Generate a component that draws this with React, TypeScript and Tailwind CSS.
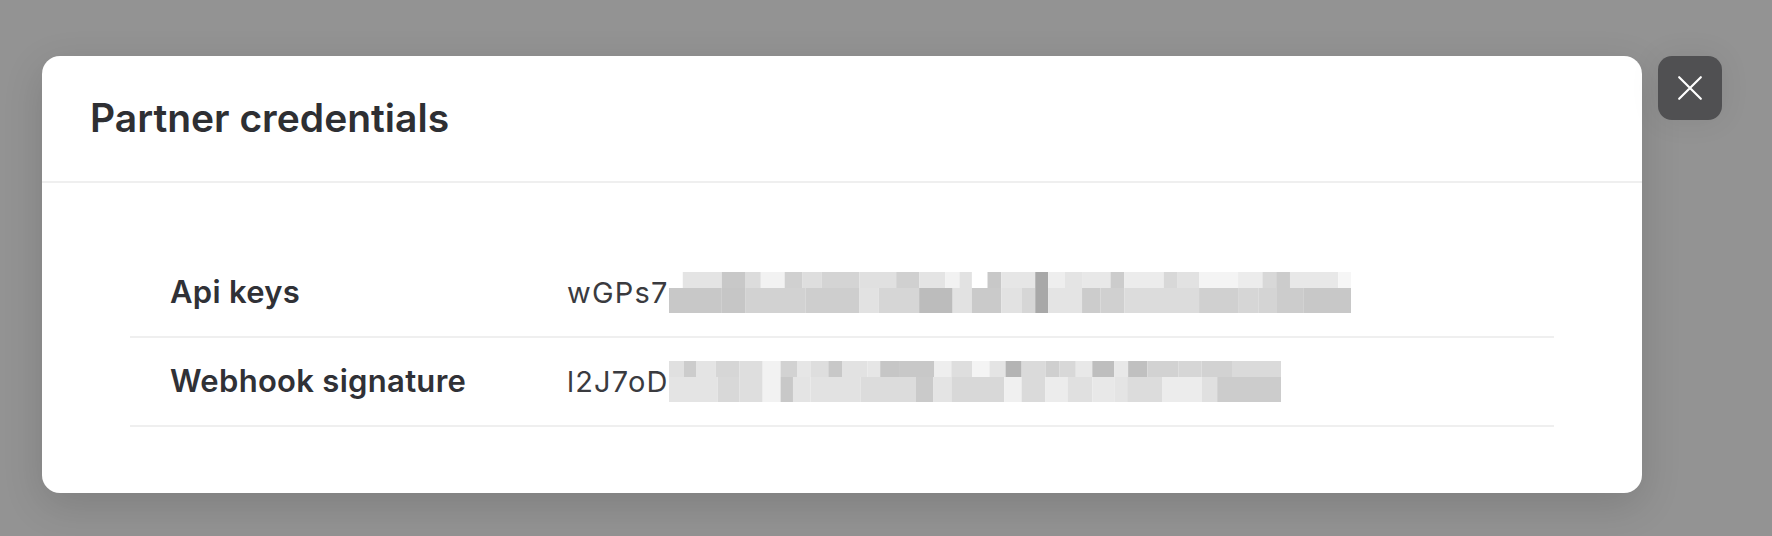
import React from 'react';

type Block = [number, number, string];

// mosaic blocks: [start, end, colour] in the source units of each strip
const keyTop: Block[] = [
  [90, 175, '#e4e4e4'], [175, 227, '#c8c8c8'], [227, 260, '#dcdcdc'], [260, 312, '#f2f2f2'],
  [312, 350, '#d0d0d0'], [350, 392, '#dedede'], [392, 475, '#d4d4d4'], [475, 555, '#e0e0e0'],
  [555, 605, '#d0d0d0'], [605, 662, '#e4e4e4'], [662, 693, '#f2f2f2'], [693, 720, '#e2e2e2'],
  [720, 754, '#ffffff'], [754, 784, '#c8c8c8'], [784, 858, '#e6e6e6'], [858, 886, '#a8a8a8'],
  [886, 922, '#eeeeee'], [922, 960, '#e4e4e4'], [960, 1022, '#e8e8e8'], [1022, 1052, '#cccccc'],
  [1052, 1138, '#ececec'], [1138, 1167, '#d8d8d8'], [1167, 1215, '#e2e2e2'], [1215, 1300, '#f4f4f4'],
  [1300, 1353, '#ececec'], [1353, 1383, '#d8d8d8'], [1383, 1413, '#cccccc'], [1413, 1518, '#e8e8e8'],
  [1518, 1546, '#f6f6f6'],
];
const keyBottom: Block[] = [
  [60, 175, '#c8c8c8'], [175, 227, '#c6c6c6'], [227, 357, '#d2d2d2'], [357, 475, '#cecece'],
  [475, 517, '#e2e2e2'], [517, 605, '#d6d6d6'], [605, 678, '#bcbcbc'], [678, 720, '#e2e2e2'],
  [720, 784, '#cacaca'], [784, 828, '#e2e2e2'], [828, 858, '#d6d6d6'], [858, 886, '#a8a8a8'],
  [886, 960, '#e4e4e4'], [960, 1000, '#cccccc'], [1000, 1052, '#d0d0d0'], [1052, 1215, '#dcdcdc'],
  [1215, 1300, '#d0d0d0'], [1300, 1345, '#d6d6d6'], [1345, 1383, '#d4d4d4'], [1383, 1442, '#cccccc'],
  [1442, 1546, '#c8c8c8'],
];
const sigTop: Block[] = [
  [60, 92, '#e0e0e0'], [92, 120, '#cccccc'], [120, 162, '#e4e4e4'], [162, 213, '#d6d6d6'],
  [213, 264, '#dedede'], [264, 303, '#f2f2f2'], [303, 340, '#d2d2d2'], [340, 368, '#e6e6e6'],
  [368, 407, '#dedede'], [407, 438, '#c8c8c8'], [438, 492, '#e2e2e2'], [492, 520, '#e6e6e6'],
  [520, 563, '#c6c6c6'], [563, 638, '#c8c8c8'], [638, 675, '#eeeeee'], [675, 720, '#dedede'],
  [720, 758, '#f4f4f4'], [758, 793, '#e4e4e4'], [793, 828, '#b4b4b4'], [828, 880, '#dadada'],
  [880, 910, '#cfcfcf'], [910, 946, '#d8d8d8'], [946, 982, '#e8e8e8'], [982, 1030, '#bebebe'],
  [1030, 1060, '#e8e8e8'], [1060, 1102, '#c0c0c0'], [1102, 1170, '#d2d2d2'], [1170, 1220, '#d6d6d6'],
  [1220, 1288, '#d2d2d2'], [1288, 1393, '#dadada'],
];
const sigBottom: Block[] = [
  [60, 166, '#e4e4e4'], [166, 213, '#d8d8d8'], [213, 264, '#dedede'], [264, 303, '#f2f2f2'],
  [303, 330, '#c8c8c8'], [330, 368, '#e4e4e4'], [368, 477, '#e2e2e2'], [477, 598, '#dcdcdc'],
  [598, 636, '#cacaca'], [636, 675, '#e4e4e4'], [675, 790, '#d8d8d8'], [790, 828, '#f0f0f0'],
  [828, 880, '#dadada'], [880, 928, '#ececec'], [928, 982, '#e0e0e0'], [982, 1030, '#e8e8e8'],
  [1030, 1058, '#e4e4e4'], [1058, 1135, '#dcdcdc'], [1135, 1220, '#ececec'], [1220, 1254, '#e0e0e0'],
  [1254, 1393, '#cccccc'],
];

const Mosaic: React.FC<{ top: Block[]; bottom: Block[]; end: number; width: number }> = ({
  top,
  bottom,
  end,
  width,
}) => (
  <svg
    width={width}
    height={41}
    viewBox={`60 0 ${end - 60} 41`}
    preserveAspectRatio="none"
    className="block shrink-0"
  >
    {top.map(([a, b, c], i) => (
      <rect key={`t${i}`} x={a} y={0} width={b - a} height={16} fill={c} />
    ))}
    {bottom.map(([a, b, c], i) => (
      <rect key={`b${i}`} x={a} y={16} width={b - a} height={25} fill={c} />
    ))}
  </svg>
);

interface Credential {
  label: string;
  visible: string;
  top: Block[];
  bottom: Block[];
  end: number;
  width: number;
}

const credentials: Credential[] = [
  { label: 'Api keys', visible: 'wGPs7', top: keyTop, bottom: keyBottom, end: 1546, width: 682 },
  { label: 'Webhook signature', visible: 'l2J7oD', top: sigTop, bottom: sigBottom, end: 1393, width: 612 },
];

export default function App() {
  return (
    <div
      className="min-h-[536px] w-full bg-[#939393] flex items-start pt-[56px] pl-[42px] gap-4"
      style={{ fontFamily: 'Inter, "Noto Sans", sans-serif' }}
    >
      <div className="w-[1600px] bg-white rounded-[18px] shadow-[0_12px_40px_rgba(0,0,0,0.14)]">
        {/* Header */}
        <div className="h-[127px] border-b-2 border-[#efefef] flex items-center pl-[48px]">
          <h2 className="text-[39px] font-semibold text-[#2e2f33]">Partner credentials</h2>
        </div>

        {/* Body */}
        <div className="px-[88px] py-[66px]">
          {credentials.map((c) => (
            <div key={c.label} className="h-[89px] border-b-2 border-[#efefef] flex items-center pl-[40px]">
              <div className="w-[397px] shrink-0 text-[31px] tracking-[0.3px] font-semibold text-[#303136]">
                {c.label}
              </div>
              <div className="flex items-center text-[29px] tracking-[1.2px] text-[#3a3b3f]">
                <span>{c.visible}</span>
                <Mosaic top={c.top} bottom={c.bottom} end={c.end} width={c.width} />
              </div>
            </div>
          ))}
        </div>
      </div>

      {/* Close button */}
      <button className="w-16 h-16 rounded-[14px] bg-[#505052] flex items-center justify-center shadow-[0_0_30px_rgba(0,0,0,0.08)]">
        <svg width="26" height="26" viewBox="0 0 24 24" fill="none" stroke="white" strokeWidth={2} strokeLinecap="round">
          <path d="M2 2L22 22M22 2L2 22" />
        </svg>
      </button>
    </div>
  );
}
